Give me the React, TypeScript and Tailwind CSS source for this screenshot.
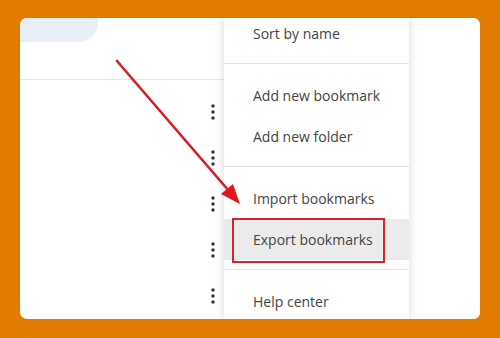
import React from "react";

const font = { fontFamily: '"Open Sans", "Noto Sans", sans-serif' };

function Kebab() {
  return (
    <svg width="4" height="16" viewBox="0 0 4 16" className="text-[#333]">
      <circle cx="2" cy="2" r="1.7" fill="currentColor" />
      <circle cx="2" cy="8" r="1.7" fill="currentColor" />
      <circle cx="2" cy="14" r="1.7" fill="currentColor" />
    </svg>
  );
}

function MenuItem({
  label,
  active,
  boxed,
}: {
  label: string;
  active?: boolean;
  boxed?: boolean;
}) {
  return (
    <div
      className={`relative flex h-[41px] items-center pl-[29px] text-[14px] text-[#444] ${
        active ? "bg-[#ebebeb]" : ""
      }`}
    >
      {label}
      {boxed && (
        <div className="pointer-events-none absolute left-[8px] top-[-1px] h-[45px] w-[153px] border-2 border-[#d8232a]" />
      )}
    </div>
  );
}

function Separator() {
  return <div className="mb-[11px] mt-[9px] h-px bg-[#e3e3e3]" />;
}

export default function App() {
  return (
    <div
      className="relative h-[338px] w-[500px] bg-[#e27c00] pb-[19px] pl-[20px] pr-[20px] pt-[18px]"
      style={font}
    >
      <div className="flex h-full w-full overflow-hidden rounded-[7px] bg-white">
        {/* left list */}
        <div className="flex w-[204px] flex-col">
          <div className="h-[62px] border-b border-[#e6e6e6]">
            <div className="h-[24px] w-[78px] rounded-br-[20px] bg-[#eaeef7]" />
          </div>
          <div className="flex flex-col pt-[9px]">
            {[0, 1, 2, 3, 4].map((i) => (
              <div key={i} className="flex h-[46px] items-center justify-end pr-[9px]">
                <Kebab />
              </div>
            ))}
          </div>
        </div>

        {/* context menu */}
        <div className="relative z-10 w-[185px] bg-white shadow-[0_0_9px_rgba(0,0,0,0.16)]">
          <div className="-mt-[5px] flex flex-col">
            <MenuItem label="Sort by name" />
            <Separator />
            <MenuItem label="Add new bookmark" />
            <MenuItem label="Add new folder" />
            <Separator />
            <MenuItem label="Import bookmarks" />
            <MenuItem label="Export bookmarks" active boxed />
            <Separator />
            <MenuItem label="Help center" />
          </div>
        </div>

        <div className="flex-1 bg-white" />
      </div>

      {/* annotation arrow */}
      <svg
        className="pointer-events-none absolute left-0 top-0 z-20"
        width="500"
        height="338"
        viewBox="0 0 500 338"
      >
        <line x1="117" y1="61" x2="229" y2="191" stroke="#dc1a1f" strokeWidth="2.6" strokeLinecap="round" />
        <polygon points="240,204 221,194 233,184" fill="#e3141c" />
      </svg>
    </div>
  );
}
